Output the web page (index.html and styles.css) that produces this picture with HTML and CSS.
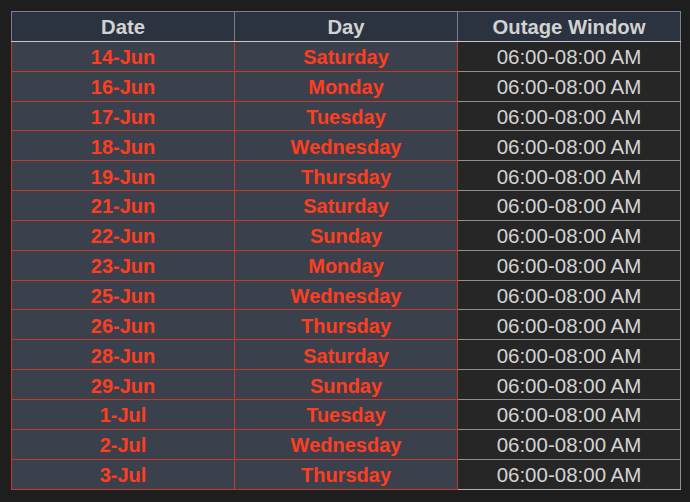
FILE: index.html
```html
<!DOCTYPE html>
<html>
<head>
<meta charset="utf-8">
<link rel="stylesheet" href="styles.css">
</head>
<body>
<table class="schedule">
  <thead>
    <tr><th>Date</th><th>Day</th><th>Outage Window</th></tr>
  </thead>
  <tbody>
    <tr><td class="hl">14-Jun</td><td class="hl">Saturday</td><td class="win">06:00-08:00 AM</td></tr>
    <tr><td class="hl">16-Jun</td><td class="hl">Monday</td><td class="win">06:00-08:00 AM</td></tr>
    <tr><td class="hl">17-Jun</td><td class="hl">Tuesday</td><td class="win">06:00-08:00 AM</td></tr>
    <tr><td class="hl">18-Jun</td><td class="hl">Wednesday</td><td class="win">06:00-08:00 AM</td></tr>
    <tr><td class="hl">19-Jun</td><td class="hl">Thursday</td><td class="win">06:00-08:00 AM</td></tr>
    <tr><td class="hl">21-Jun</td><td class="hl">Saturday</td><td class="win">06:00-08:00 AM</td></tr>
    <tr><td class="hl">22-Jun</td><td class="hl">Sunday</td><td class="win">06:00-08:00 AM</td></tr>
    <tr><td class="hl">23-Jun</td><td class="hl">Monday</td><td class="win">06:00-08:00 AM</td></tr>
    <tr><td class="hl">25-Jun</td><td class="hl">Wednesday</td><td class="win">06:00-08:00 AM</td></tr>
    <tr><td class="hl">26-Jun</td><td class="hl">Thursday</td><td class="win">06:00-08:00 AM</td></tr>
    <tr><td class="hl">28-Jun</td><td class="hl">Saturday</td><td class="win">06:00-08:00 AM</td></tr>
    <tr><td class="hl">29-Jun</td><td class="hl">Sunday</td><td class="win">06:00-08:00 AM</td></tr>
    <tr><td class="hl">1-Jul</td><td class="hl">Tuesday</td><td class="win">06:00-08:00 AM</td></tr>
    <tr><td class="hl">2-Jul</td><td class="hl">Wednesday</td><td class="win">06:00-08:00 AM</td></tr>
    <tr><td class="hl">3-Jul</td><td class="hl">Thursday</td><td class="win">06:00-08:00 AM</td></tr>
  </tbody>
</table>
</body>
</html>
```
FILE: styles.css
```css
html, body {
  margin: 0;
  padding: 0;
  background: #1e1e1e;
}
body {
  padding: 11px 9px 0 11px;
  font-family: "Liberation Sans", Arial, sans-serif;
}
.schedule {
  width: 670px;
  border-collapse: collapse;
  table-layout: fixed;
}
.schedule th,
.schedule td {
  height: 29.85px;
  padding: 2px 0 0;
  text-align: center;
  font-size: 20px;
  line-height: 22px;
  box-sizing: border-box;
}
.schedule th {
  background: #2b3240;
  color: #d2d2d2;
  font-weight: bold;
  font-size: 20.3px;
  border: 1px solid #7c8088;
  border-bottom: 1px solid #c8c8c8;
}
.schedule td.hl {
  background: #3a404c;
  color: #ff3d1f;
  font-weight: bold;
  border: 1px solid #c23a2a;
}
.schedule td.win {
  background: #262626;
  color: #d4d4d4;
  font-size: 20.5px;
  border-top: 1px solid #8f8f8f;
  border-bottom: 1px solid #8f8f8f;
  border-right: 1px solid #8f8f8f;
  border-left: 1px solid #c23a2a;
}
.schedule tbody tr:last-child td.win {
  border-bottom-color: #b0b0b0;
}
```
